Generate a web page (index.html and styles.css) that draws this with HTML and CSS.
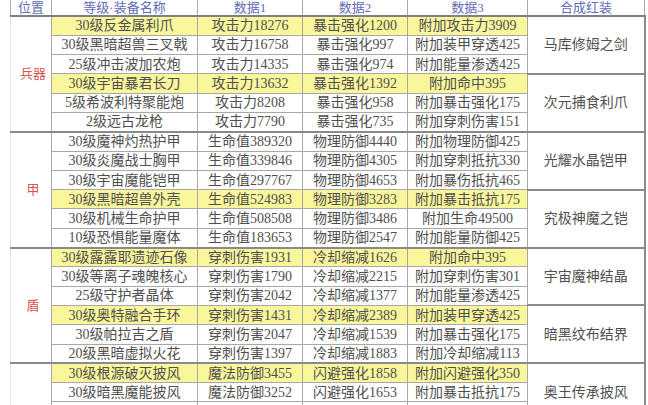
FILE: index.html
```html
<!DOCTYPE html>
<html lang="zh">
<head>
<meta charset="utf-8">
<link rel="stylesheet" href="styles.css">
</head>
<body>
<table class="equip">
<colgroup>
<col class="c-pos"><col class="c-name"><col class="c-d1"><col class="c-d2"><col class="c-d3"><col class="c-red">
</colgroup>
<thead>
<tr class="head"><th>位置</th><th>等级·装备名称</th><th>数据1</th><th>数据2</th><th>数据3</th><th>合成红装</th></tr>
</thead>
<tbody>
<tr class="hl"><td class="pos sec" rowspan="6">兵器</td><td>30级反金属利爪</td><td>攻击力18276</td><td>暴击强化1200</td><td>附加攻击力3909</td><td class="red" rowspan="3">马库修姆之剑</td></tr>
<tr><td>30级黑暗超兽三叉戟</td><td>攻击力16758</td><td>暴击强化997</td><td>附加装甲穿透425</td></tr>
<tr><td>25级冲击波加农炮</td><td>攻击力14335</td><td>暴击强化974</td><td>附加能量渗透425</td></tr>
<tr class="hl"><td>30级宇宙暴君长刀</td><td>攻击力13632</td><td>暴击强化1392</td><td>附加命中395</td><td class="red" rowspan="3">次元捕食利爪</td></tr>
<tr><td>5级希波利特聚能炮</td><td>攻击力8208</td><td>暴击强化958</td><td>附加暴击强化175</td></tr>
<tr class="end"><td>2级远古龙枪</td><td>攻击力7790</td><td>暴击强化735</td><td>附加穿刺伤害151</td></tr>

<tr><td class="pos sec" rowspan="6">甲</td><td>30级魔神灼热护甲</td><td>生命值389320</td><td>物理防御4440</td><td>附加物理防御425</td><td class="red" rowspan="3">光耀水晶铠甲</td></tr>
<tr><td>30级炎魔战士胸甲</td><td>生命值339846</td><td>物理防御4305</td><td>附加穿刺抵抗330</td></tr>
<tr><td>30级宇宙魔能铠甲</td><td>生命值297767</td><td>物理防御4653</td><td>附加暴伤抵抗465</td></tr>
<tr class="hl"><td>30级黑暗超兽外壳</td><td>生命值524983</td><td>物理防御3283</td><td>附加暴击抵抗175</td><td class="red" rowspan="3">究极神魔之铠</td></tr>
<tr><td>30级机械生命护甲</td><td>生命值508508</td><td>物理防御3486</td><td>附加生命49500</td></tr>
<tr class="end"><td>10级恐惧能量魔体</td><td>生命值183653</td><td>物理防御2547</td><td>附加能量防御425</td></tr>

<tr class="hl"><td class="pos sec" rowspan="6">盾</td><td>30级露露耶遗迹石像</td><td>穿刺伤害1931</td><td>冷却缩减1626</td><td>附加命中395</td><td class="red" rowspan="3">宇宙魔神结晶</td></tr>
<tr><td>30级等离子魂魄核心</td><td>穿刺伤害1790</td><td>冷却缩减2215</td><td>附加穿刺伤害301</td></tr>
<tr><td>25级守护者晶体</td><td>穿刺伤害2042</td><td>冷却缩减1377</td><td>附加能量渗透425</td></tr>
<tr class="hl"><td>30级奥特融合手环</td><td>穿刺伤害1431</td><td>冷却缩减2389</td><td>附加装甲穿透425</td><td class="red" rowspan="3">暗黑纹布结界</td></tr>
<tr><td>30级帕拉吉之盾</td><td>穿刺伤害2047</td><td>冷却缩减1539</td><td>附加暴击强化175</td></tr>
<tr class="end"><td>20级黑暗虚拟火花</td><td>穿刺伤害1397</td><td>冷却缩减1883</td><td>附加冷却缩减113</td></tr>

<tr class="hl"><td class="pos sec" rowspan="6"></td><td>30级根源破灭披风</td><td>魔法防御3455</td><td>闪避强化1858</td><td>附加闪避强化350</td><td class="red" rowspan="3">奥王传承披风</td></tr>
<tr><td>30级暗黑魔能披风</td><td>魔法防御3252</td><td>闪避强化1653</td><td>附加暴击抵抗175</td></tr>
<tr><td></td><td></td><td></td><td></td></tr>
<tr class="hl"><td></td><td></td><td></td><td></td><td class="red" rowspan="3"></td></tr>
<tr><td></td><td></td><td></td><td></td></tr>
<tr class="end"><td></td><td></td><td></td><td></td></tr>
</tbody>
</table>
</body>
</html>
```
FILE: styles.css
```css
html, body {
  margin: 0;
  padding: 0;
  background: #ffffff;
  overflow: hidden;
  width: 648px;
  height: 405px;
}

.equip {
  margin-left: 10px;
  border-collapse: collapse;
  table-layout: fixed;
  width: 634px;
  font-family: "Liberation Serif", "Noto Sans CJK SC", serif;
  font-size: 14px;
  color: #4f4f4f;
}

.c-pos { width: 41px; }
.c-name { width: 146px; }
.c-d1 { width: 105px; }
.c-d2 { width: 105px; }
.c-d3 { width: 120px; }
.c-red { width: 117px; }

.equip th,
.equip td {
  border: 1px solid #a8a8a8;
  padding: 0;
  text-align: center;
  white-space: nowrap;
  overflow: hidden;
  line-height: 17px;
}

.head th {
  height: 15px;
  font-weight: normal;
  color: #5f6cb5;
  border-top: none;
  border-bottom: 2px solid #7d7f8c;
  line-height: 15px;
  font-size: 13px;
}

.equip tbody tr {
  height: 19.3px;
}

.equip tr.hl td {
  background: #faf69c;
}

.equip tr.hl td.pos,
.equip tr.hl td.red {
  background: #ffffff;
}

.equip td.pos {
  color: #d65454;
  font-size: 13px;
  padding-left: 4px;
  border-left-color: #e4e4e4;
  border-bottom: 2px solid #8a8a8a;
}

.equip td.red {
  font-size: 14px;
  color: #505050;
  border-right: 2px solid #8a8a8a;
  border-bottom: 2px solid #8a8a8a;
}

.equip tr.end td {
  border-bottom: 2px solid #8a8a8a;
}
```
